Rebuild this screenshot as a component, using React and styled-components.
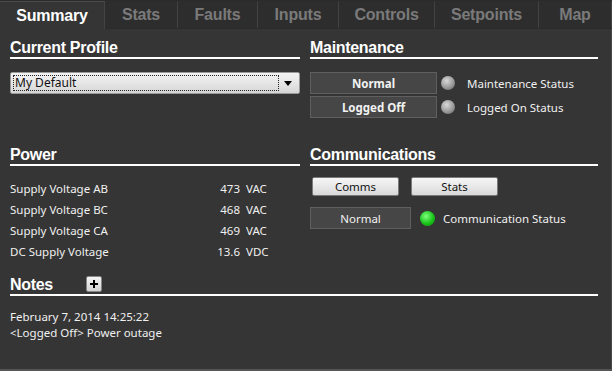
import React from 'react';
import styled, { createGlobalStyle } from 'styled-components';

const GlobalStyle = createGlobalStyle`
  html, body { margin: 0; padding: 0; background: #353535; }
  body { font-family: "Noto Sans", "DejaVu Sans", sans-serif; }
`;

const Frame = styled.div`
  width: 612px;
  height: 371px;
  box-sizing: border-box;
  background: #353535;
  display: flex;
  flex-direction: column;
  overflow: hidden;
`;

const TabBar = styled.div`
  display: flex;
  height: 29px;
  background: #2b2b2b;
  box-sizing: border-box;
  padding-top: 1px;
`;

const Tab = styled.div`
  width: ${p => p.$w}px;
  flex: ${p => (p.$last ? 1 : 'none')};
  box-sizing: border-box;
  display: flex;
  align-items: center;
  justify-content: center;
  font: bold 16px "Liberation Sans", Arial, sans-serif;
  letter-spacing: -0.2px;
  color: ${p => (p.$active ? '#ffffff' : '#7a7a7a')};
  background: ${p => (p.$active ? '#353535' : '#2d2d2d')};
  border-top: 1px solid ${p => (p.$active ? '#4a4a4a' : '#2d2d2d')};
  border-right: 1px solid #434343;
  height: ${p => (p.$active ? 28 : 27)}px;
`;

const Body = styled.div`
  flex: 1;
  box-sizing: border-box;
  padding: 9px 15px 0 10px;
  border-left: 1px solid #555;
  border-right: 1px solid #4a4a4a;
  border-bottom: 2px solid #555;
  margin-left: -1px;
`;

const Grid = styled.div`
  display: grid;
  grid-template-columns: 290px 288px;
  column-gap: 10px;
  margin-top: ${p => p.$top || 0}px;
`;

const Heading = styled.div`
  display: flex;
  align-items: center;
  height: 19px;
  border-bottom: 2px solid #ffffff;
  font: bold 16px/19px "Liberation Sans", Arial, sans-serif;
  letter-spacing: -0.3px;
  color: #ffffff;
`;

const Section = styled.div`
  display: flex;
  flex-direction: column;
  gap: ${p => p.$gap || 12}px;
`;

const ProfileSelect = styled.div`
  height: 22px;
  box-sizing: border-box;
  border: 1px solid #9a9a9a;
  border-radius: 2px;
  background: linear-gradient(#f2f2f2, #e6e6e6 50%, #d6d6d6);
  display: flex;
  align-items: center;
  padding: 2px;
`;

const SelectValue = styled.div`
  flex: 1;
  height: 16px;
  box-sizing: border-box;
  border: 1px dotted #222;
  font-size: 12px;
  line-height: 14px;
  color: #111;
  padding-left: 1px;
`;

const SelectArrow = styled.div`
  width: 18px;
  display: flex;
  justify-content: center;
`;

const StatusList = styled.div`
  display: flex;
  flex-direction: column;
  gap: 2px;
`;

const StatusRow = styled.div`
  display: flex;
  align-items: center;
`;

const StatusBox = styled.div`
  width: ${p => p.$w}px;
  height: 22px;
  box-sizing: border-box;
  background: #464646;
  border: 1px solid #5f5f5f;
  display: flex;
  align-items: center;
  justify-content: center;
  font-size: 11.5px;
  font-weight: ${p => (p.$bold ? 700 : 400)};
  color: #f2f2f2;
`;

const Led = styled.span`
  width: ${p => p.$size}px;
  height: ${p => p.$size}px;
  border-radius: 50%;
  margin: 0 ${p => p.$right}px 0 ${p => p.$left}px;
  background: ${p =>
    p.$on
      ? 'radial-gradient(circle at 40% 35%, #7dff7d, #19c419 55%, #0b8a0b)'
      : 'radial-gradient(circle at 40% 35%, #d8d8d8, #9a9a9a 55%, #5c5c5c)'};
`;

const Label = styled.span`
  font-size: 11.5px;
  color: #f0f0f0;
`;

const DataTable = styled.div`
  display: grid;
  grid-template-columns: 174px 50px auto;
  column-gap: 6px;
  font-size: 11.5px;
  line-height: 21px;
  color: #f0f0f0;
`;

const Value = styled.span`
  text-align: right;
`;

const ButtonRow = styled.div`
  display: flex;
  gap: 12px;
  padding-left: 2px;
`;

const Button = styled.button`
  width: 87px;
  height: 19px;
  box-sizing: border-box;
  border: 1px solid #7a7a7a;
  border-radius: 2px;
  background: linear-gradient(#f6f6f6, #e8e8e8 50%, #d8d8d8);
  font-family: "Noto Sans", sans-serif;
  font-size: 11.5px;
  line-height: 15px;
  color: #111;
  padding: 0;
`;

const NotesBlock = styled.div`
  margin-top: 13px;
  width: 588px;
`;

const NotesHeading = styled(Heading)`
  gap: 33px;
`;

const PlusButton = styled.span`
  width: 16px;
  height: 16px;
  box-sizing: border-box;
  border: 1px solid #888;
  border-radius: 2px;
  background: linear-gradient(#f4f4f4, #d4d4d4);
  display: flex;
  align-items: center;
  justify-content: center;
  margin-top: -2px;
`;

const Notes = styled.div`
  margin-top: 13px;
  font-size: 11.5px;
  line-height: 16px;
  color: #f0f0f0;
`;

const tabs = [
  ['Summary', 105],
  ['Stats', 73],
  ['Faults', 80],
  ['Inputs', 81],
  ['Controls', 96],
  ['Setpoints', 104],
  ['Map', 73],
];

const power = [
  ['Supply Voltage AB', '473', 'VAC'],
  ['Supply Voltage BC', '468', 'VAC'],
  ['Supply Voltage CA', '469', 'VAC'],
  ['DC Supply Voltage', '13.6', 'VDC'],
];

const App = () => {
  return (
    <Frame>
      <GlobalStyle />
      <TabBar>
        {tabs.map(([name, w], i) => (
          <Tab key={name} $w={w} $active={i === 0} $last={i === tabs.length - 1}>
            {name}
          </Tab>
        ))}
      </TabBar>
      <Body>
        <Grid>
          <Section $gap={13}>
            <Heading>Current Profile</Heading>
            <ProfileSelect>
              <SelectValue>My Default</SelectValue>
              <SelectArrow>
                <svg width="8" height="5" viewBox="0 0 8 5">
                  <path d="M0 0h8L4 5z" fill="#000" />
                </svg>
              </SelectArrow>
            </ProfileSelect>
          </Section>
          <Section $gap={13}>
            <Heading>Maintenance</Heading>
            <StatusList>
              <StatusRow>
                <StatusBox $w={127} $bold>Normal</StatusBox>
                <Led $size={14} $left={4} $right={12} />
                <Label>Maintenance Status</Label>
              </StatusRow>
              <StatusRow>
                <StatusBox $w={127} $bold>Logged Off</StatusBox>
                <Led $size={14} $left={4} $right={12} />
                <Label>Logged On Status</Label>
              </StatusRow>
            </StatusList>
          </Section>
        </Grid>
        <Grid $top={27}>
          <Section>
            <Heading>Power</Heading>
            <DataTable>
              {power.map(([name, v, u]) => (
                <React.Fragment key={name}>
                  <span>{name}</span>
                  <Value>{v}</Value>
                  <span>{u}</span>
                </React.Fragment>
              ))}
            </DataTable>
          </Section>
          <Section $gap={11}>
            <Heading>Communications</Heading>
            <ButtonRow>
              <Button>Comms</Button>
              <Button>Stats</Button>
            </ButtonRow>
            <StatusRow>
              <StatusBox $w={101}>Normal</StatusBox>
              <Led $size={15} $on $left={9} $right={8} />
              <Label>Communication Status</Label>
            </StatusRow>
          </Section>
        </Grid>
        <NotesBlock>
          <NotesHeading>
            Notes
            <PlusButton>
              <svg width="8" height="8" viewBox="0 0 8 8">
                <path d="M3 0h2v3h3v2H5v3H3V5H0V3h3z" fill="#000" />
              </svg>
            </PlusButton>
          </NotesHeading>
          <Notes>
            February 7, 2014 14:25:22
            <br />
            &lt;Logged Off&gt; Power outage
          </Notes>
        </NotesBlock>
      </Body>
    </Frame>
  );
};

export default App;
